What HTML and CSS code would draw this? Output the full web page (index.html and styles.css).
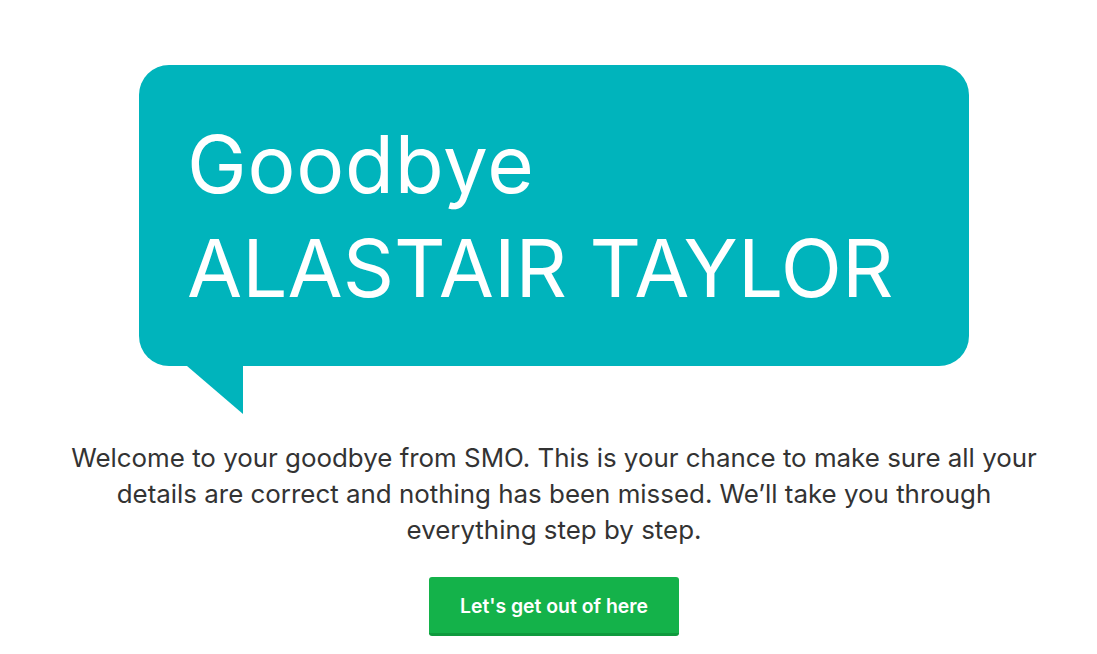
FILE: index.html
```html
<!DOCTYPE html>
<html lang="en">
<head>
<meta charset="utf-8">
<title>Goodbye</title>
<link rel="stylesheet" href="styles.css">
</head>
<body>
<main class="page">
  <section class="bubble-wrap">
    <div class="bubble">
      <h1 class="bubble-title"><span class="hello">Goodbye</span><span class="name">ALASTAIR TAYLOR</span></h1>
    </div>
    <div class="tail"></div>
  </section>
  <p class="intro">Welcome to your goodbye from SMO. This is your chance to make sure all your details are correct and nothing has been missed. We’ll take you through everything step by step.</p>
  <a class="btn" href="#">Let's get out of here</a>
</main>
</body>
</html>
```
FILE: styles.css
```css
html, body {
  margin: 0;
  padding: 0;
  background: #fff;
}
body {
  font-family: "Inter", "Lato", sans-serif;
  color: #333;
}
.page {
  width: 1108px;
  display: flex;
  flex-direction: column;
  align-items: center;
  padding-top: 65px;
}
.bubble-wrap {
  width: 830px;
  display: flex;
  flex-direction: column;
}
.bubble {
  background: #00b4bc;
  border-radius: 30px;
  height: 301px;
  box-sizing: border-box;
  padding: 47px 0 0 48px;
}
.bubble-title {
  margin: 0;
  font-weight: 400;
  color: #fff;
  display: flex;
  flex-direction: column;
  font-size: 80px;
  line-height: 104px;
}
.hello {
  letter-spacing: 0.8px;
}
.tail {
  width: 56px;
  height: 48px;
  margin-left: 48px;
  background: #00b4bc;
  clip-path: polygon(0 0, 100% 0, 100% 100%);
}
.intro {
  width: 1000px;
  margin: 26px 0 0;
  text-align: center;
  font-size: 25.9px;
  line-height: 36px;
  color: #333;
}
.btn {
  margin-top: 29px;
  width: 250px;
  height: 59px;
  box-sizing: border-box;
  padding-top: 2px;
  display: flex;
  align-items: center;
  justify-content: center;
  background: #14b24a;
  border-bottom: 3px solid #0f9a3d;
  border-radius: 3px;
  color: #fff;
  text-decoration: none;
  font-weight: 600;
  font-size: 19.4px;
}
```
